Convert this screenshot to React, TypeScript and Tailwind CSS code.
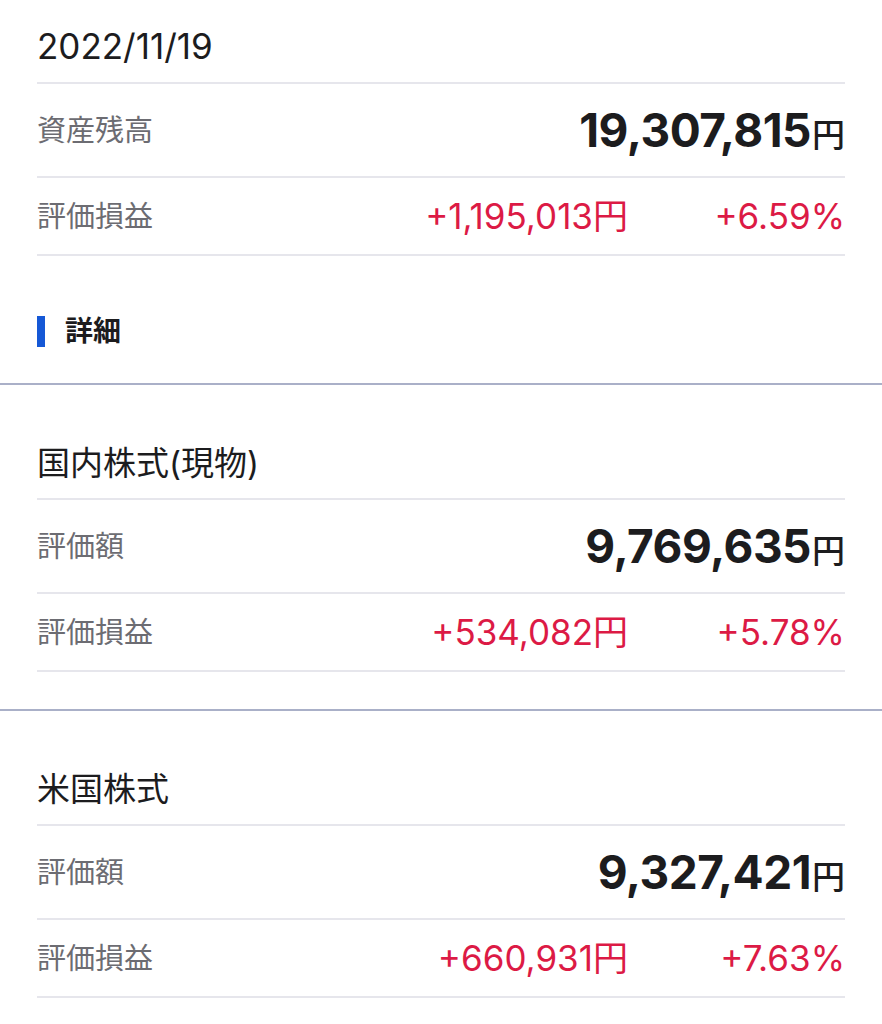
import React from "react";

const FONT = "font-[Inter,'Noto_Sans_CJK_JP',sans-serif]";

function ValueRow({ label, value }: { label: string; value: string }) {
  return (
    <div className="h-[94px] border-b-2 border-[#e6e6ec] flex items-center justify-between">
      <span className="text-[29px] leading-none text-[#6c6c72]">{label}</span>
      <span className="flex items-baseline text-[#1c1c1e]">
        <span className="text-[46px] font-bold leading-none tracking-[-0.5px]">{value}</span>
        <span className="text-[33px] font-medium leading-none ml-[1px]">円</span>
      </span>
    </div>
  );
}

function PLRow({ yen, pct }: { yen: string; pct: string }) {
  return (
    <div className="h-[78px] border-b-2 border-[#e6e6ec] flex items-center justify-between">
      <span className="text-[29px] leading-none text-[#6c6c72]">評価損益</span>
      <span className="flex items-center text-[#dc1a45] text-[35px] leading-none">
        <span>{yen}円</span>
        <span className="w-[217px] text-right">{pct}</span>
      </span>
    </div>
  );
}

function Section({ title, value, yen, pct }: { title: string; value: string; yen: string; pct: string }) {
  return (
    <div className="px-[37px]">
      <div className="h-[115px] pt-[43px] border-b-2 border-[#e6e6ec] flex items-center">
        <span className="text-[33px] leading-none text-[#1c1c1e]">{title}</span>
      </div>
      <ValueRow label="評価額" value={value} />
      <PLRow yen={yen} pct={pct} />
    </div>
  );
}

export default function App() {
  return (
    <div className={`${FONT} bg-white w-[882px] h-[1024px] overflow-hidden`}>
      <div className="px-[37px]">
        <div className="h-[84px] pt-[10px] border-b-2 border-[#e6e6ec] flex items-center">
          <span className="text-[35px] leading-none text-[#1c1c1e]">2022/11/19</span>
        </div>
        <ValueRow label="資産残高" value="19,307,815" />
        <PLRow yen="+1,195,013" pct="+6.59%" />
        <div className="h-[127px] pt-[23px] flex items-center">
          <span className="w-[8px] h-[31px] bg-[#1558d6]" />
          <span className="ml-[20px] text-[28px] font-bold leading-none text-[#1c1c1e]">詳細</span>
        </div>
      </div>
      <div className="h-[2px] bg-[#aab0c8]" />
      <Section title="国内株式(現物)" value="9,769,635" yen="+534,082" pct="+5.78%" />
      <div className="h-[37px]" />
      <div className="h-[2px] bg-[#aab0c8]" />
      <Section title="米国株式" value="9,327,421" yen="+660,931" pct="+7.63%" />
    </div>
  );
}
